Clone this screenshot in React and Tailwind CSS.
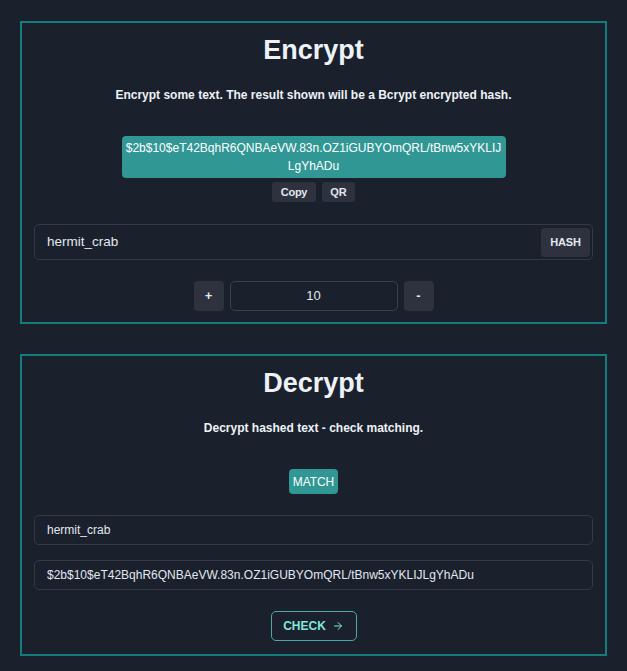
import React from "react";

const font = { fontFamily: '"Liberation Sans", Arial, sans-serif' };

export default function App() {
  const hash = "$2b$10$eT42BqhR6QNBAeVW.83n.OZ1iGUBYOmQRL/tBnw5xYKLIJLgYhADu";
  return (
    <div className="min-h-[671px] bg-[#1a202c] px-5 pt-[21px] pb-4 text-[#edf2f7]" style={font}>
      <div className="border-2 border-[#137c7c] px-3 pt-[8px] pb-[11px]">
        <h1 className="text-center text-[27px] font-bold leading-[38px] text-[#edf2f7]">Encrypt</h1>
        <p className="mt-[18px] text-center text-[12px] font-bold leading-[16px]">
          Encrypt some text. The result shown will be a Bcrypt encrypted hash.
        </p>
        <div className="mt-[33px] flex flex-col items-center">
          <div className="w-[384px] rounded-[4px] bg-[#319795] px-[3px] py-[3px] text-center text-[12px] leading-[18px] text-white break-all">
            {hash}
          </div>
          <div className="mt-[4px] flex gap-[6px]">
            <button className="h-[20px] w-[44px] rounded-[3px] bg-[#2d323e] text-[11px] font-bold tracking-[-0.3px] text-[#e2e8f0]">Copy</button>
            <button className="h-[20px] w-[33px] rounded-[3px] bg-[#2d323e] text-[11px] font-bold text-[#e2e8f0]">QR</button>
          </div>
        </div>
        <div className="mt-[22px] flex h-[36px] items-center rounded-[5px] border border-[#333a46] pl-[12px] pr-[2px]">
          <span className="flex-1 text-[13.5px] text-[#e2e8f0]">hermit_crab</span>
          <button className="h-[29px] w-[49px] rounded-[4px] bg-[#2d323e] text-[11px] font-bold tracking-[-0.2px] text-[#e2e8f0]">HASH</button>
        </div>
        <div className="mt-[21px] flex justify-center gap-[6px]">
          <button className="h-[30px] w-[30px] rounded-[4px] bg-[#2d323e] text-[13px] font-bold text-[#e2e8f0]">+</button>
          <div className="flex h-[30px] w-[168px] items-center justify-center rounded-[5px] border border-[#3a414d] text-[13px] text-[#e2e8f0]">10</div>
          <button className="h-[30px] w-[30px] rounded-[4px] bg-[#2d323e] text-[13px] font-bold text-[#e2e8f0]">-</button>
        </div>
      </div>

      <div className="mt-[30px] border-2 border-[#137c7c] px-3 pt-[8px] pb-[13px]">
        <h1 className="text-center text-[27px] font-bold leading-[38px] text-[#edf2f7]">Decrypt</h1>
        <p className="mt-[18px] text-center text-[12px] font-bold leading-[16px]">
          Decrypt hashed text - check matching.
        </p>
        <div className="mt-[33px] flex justify-center">
          <span className="flex h-[25px] items-center rounded-[4px] bg-[#319795] px-[4px] text-[12px] tracking-[-0.1px] text-white">MATCH</span>
        </div>
        <div className="mt-[21px] flex h-[30px] items-center rounded-[5px] border border-[#333a46] px-[12px] text-[12px] text-[#e2e8f0]">
          hermit_crab
        </div>
        <div className="mt-[15px] flex h-[30px] items-center rounded-[5px] border border-[#333a46] px-[12px] text-[12px] text-[#e2e8f0]">
          {hash}
        </div>
        <div className="mt-[21px] flex justify-center">
          <button className="flex h-[30px] w-[86px] items-center justify-center gap-[6px] rounded-[5px] border border-[#4ea8a4] text-[12px] font-bold text-[#81e6d9]">
            CHECK
            <svg width="12" height="12" viewBox="0 0 24 24" fill="none" stroke="currentColor" strokeWidth="2" strokeLinecap="round" strokeLinejoin="round">
              <path d="M5 12h14" />
              <path d="M12 5l7 7-7 7" />
            </svg>
          </button>
        </div>
      </div>
    </div>
  );
}
